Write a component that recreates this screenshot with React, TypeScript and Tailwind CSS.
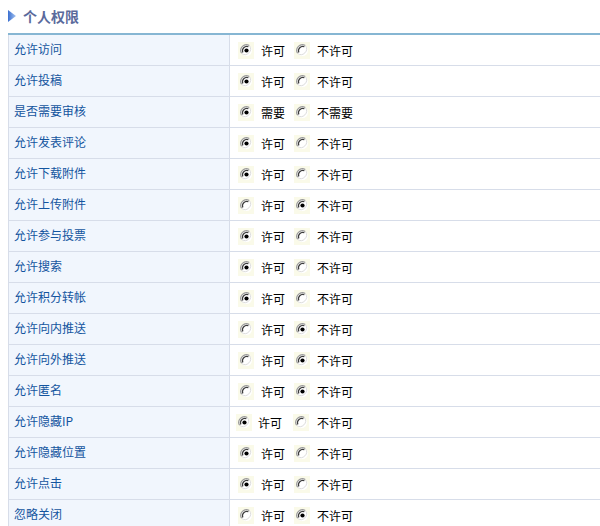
import React from 'react';

type Row = { label: string; on: 1 | 2; opts?: [string, string]; tight?: boolean };

const rows: Row[] = [
  { label: '允许访问', on: 1 },
  { label: '允许投稿', on: 1 },
  { label: '是否需要审核', on: 1, opts: ['需要', '不需要'] },
  { label: '允许发表评论', on: 1 },
  { label: '允许下载附件', on: 1 },
  { label: '允许上传附件', on: 2 },
  { label: '允许参与投票', on: 1 },
  { label: '允许搜索', on: 1 },
  { label: '允许积分转帐', on: 1 },
  { label: '允许向内推送', on: 2 },
  { label: '允许向外推送', on: 2 },
  { label: '允许匿名', on: 2 },
  { label: '允许隐藏IP', on: 1, tight: true },
  { label: '允许隐藏位置', on: 1 },
  { label: '允许点击', on: 1 },
  { label: '忽略关闭', on: 2 },
];

function Radio({ checked }: { checked: boolean }) {
  // old-style windows radio on its pale yellow focus box
  return (
    <span className="flex h-[17px] w-[16px] items-center justify-center bg-[#fafae9]">
      <svg width="13" height="13" viewBox="0 0 13 13">
        <circle cx="6.5" cy="6.5" r="5.5" fill="#fff" />
        <path d="M1.6 9.3 A5.6 5.6 0 0 1 9.3 1.6" fill="none" stroke="#9a9a9a" strokeWidth="1.2" />
        <path d="M2.8 8.4 A4.3 4.3 0 0 1 8.4 2.8" fill="none" stroke="#3c3c3c" strokeWidth="1.2" />
        <path d="M9.5 1.7 A5.6 5.6 0 0 1 1.7 9.5" fill="none" stroke="#dcdcdc" strokeWidth="1" />
        {checked && <circle cx="6.5" cy="6.5" r="2.1" fill="#000" />}
      </svg>
    </span>
  );
}

export default function App() {
  return (
    <div className="h-[526px] w-[600px] overflow-hidden bg-white text-[12px] leading-none" style={{ fontFamily: '"Noto Sans CJK SC", "DejaVu Sans", sans-serif' }}>
      <div className="flex h-[33px] items-center pl-2 pb-[2px]">
        <svg width="8" height="12" viewBox="0 0 8 12" className="mr-[7px]">
          <defs>
            <linearGradient id="tri" x1="0" y1="0" x2="1" y2="0">
              <stop offset="0" stopColor="#3a6fd0" />
              <stop offset="1" stopColor="#a6c4f0" />
            </linearGradient>
          </defs>
          <path d="M0 0 L8 6 L0 12 Z" fill="url(#tri)" />
        </svg>
        <span className="text-[14px] font-bold text-[#5a6a9c]">个人权限</span>
      </div>
      <div className="ml-2 border-t-2 border-[#86b6d3]">
        {rows.map((r) => {
          const [a, b] = r.opts ?? ['许可', '不许可'];
          return (
            <div key={r.label} className="flex h-[31px] border-b border-[#d7dde9]">
              <div className="flex w-[222px] shrink-0 items-center border-x border-[#d7dde9] bg-[#f1f6fd] pl-[5px] pb-[2px] text-[#14559f]">
                {r.label}
              </div>
              <div className={`flex flex-1 items-center pt-[1px] text-black ${r.tight ? 'pl-[6px]' : 'pl-[8px]'}`}>
                <Radio checked={r.on === 1} />
                <span className={r.tight ? 'ml-[6px]' : 'ml-[7px]'}>{a}</span>
                <span className={r.tight ? 'ml-[11px]' : 'ml-[9px]'}>
                  <Radio checked={r.on === 2} />
                </span>
                <span className={r.tight ? 'ml-[8px]' : 'ml-[7px]'}>{b}</span>
              </div>
            </div>
          );
        })}
      </div>
    </div>
  );
}
